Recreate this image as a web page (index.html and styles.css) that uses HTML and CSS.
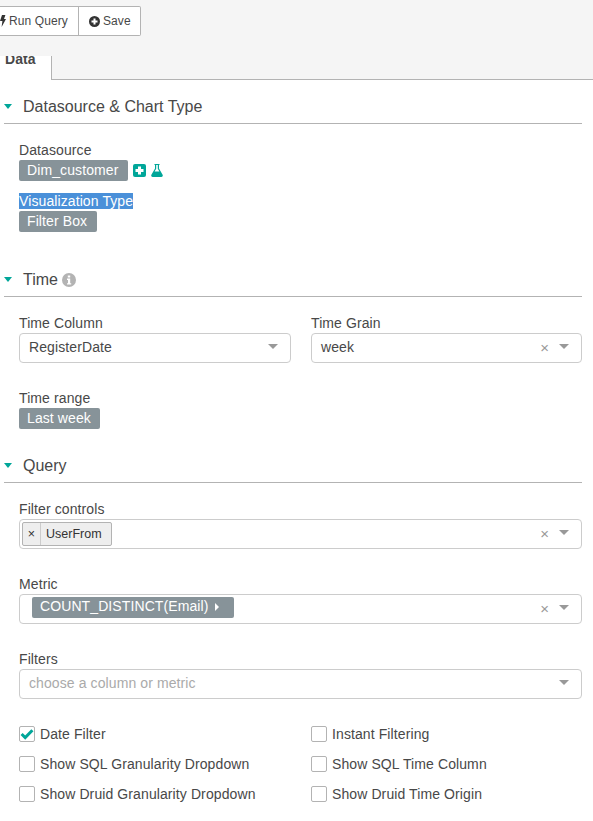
FILE: index.html
```html
<!DOCTYPE html>
<html lang="en">

<head>
    <meta charset="UTF-8">
    <title>Explore</title>
    <link rel="stylesheet" href="styles.css">
</head>

<body>
    <div class="toolbar">
        <button class="btn btn-run">
            <svg class="btn-icon" width="6" height="12" viewBox="0 0 6 12"><path d="M2 0h3.4L4 4h2L1.6 12 2.4 6H0z" fill="#333"/></svg>
            Run Query
        </button>
        <button class="btn">
            <svg class="btn-icon" width="11" height="11" viewBox="0 0 11 11"><circle cx="5.5" cy="5.5" r="5.5" fill="#333"/><path d="M2.5 4.5h2v-2h2v2h2v2h-2v2h-2v-2h-2z" fill="#fff"/></svg>
            Save
        </button>
    </div>

    <div class="tabs">
        <div class="tab"><span class="tab-label">Data</span></div>
    </div>

    <div class="section section-source">
        <div class="section-head"><span class="caret"></span><span>Datasource &amp; Chart Type</span></div>
        <div class="section-body">
            <label class="label">Datasource</label>
            <div class="pill-row">
                <span class="pill">Dim_customer</span>
                <svg class="icon-plus" width="13" height="13" viewBox="0 0 13 13"><rect width="13" height="13" rx="2" fill="#00a699"/><path d="M5 2.5h3V5h2.5v3H8v2.5H5V8H2.5V5H5z" fill="#fff"/></svg>
                <svg class="icon-flask" width="12" height="13" viewBox="0 0 12 13"><path d="M3.5 0h5v1H8v3.5l3.6 6.3c.5.9 0 2.2-1.2 2.2H1.6C.4 13-.1 11.7.4 10.8L4 4.5V1h-.5zM5.2 1v3.8L3.6 7.6h4.8L6.8 4.8V1z" fill="#00a699" fill-rule="evenodd"/></svg>
            </div>
            <div class="viz-block">
                <label class="label"><span class="selected">Visualization Type</span></label>
                <div class="pill-row"><span class="pill">Filter Box</span></div>
            </div>
        </div>
    </div>

    <div class="section section-time">
        <div class="section-head">
            <span class="caret"></span><span>Time</span>
            <svg class="icon-info" width="14" height="14" viewBox="0 0 14 14"><circle cx="7" cy="7" r="7" fill="#b3b3b3"/><path d="M5.8 2.4h2.4v2H5.8zM5 5.6h3.2v4.6h1v1.4H5v-1.4h1V7H5z" fill="#fff"/></svg>
        </div>
        <div class="section-body">
            <div class="two-col">
                <div>
                    <label class="label">Time Column</label>
                    <div class="select"><span class="select-value">RegisterDate</span><span class="arrow"></span></div>
                </div>
                <div>
                    <label class="label">Time Grain</label>
                    <div class="select"><span class="select-value">week</span><span class="clear">×</span><span class="arrow"></span></div>
                </div>
            </div>
            <div class="range-block">
                <label class="label">Time range</label>
                <div class="pill-row"><span class="pill">Last week</span></div>
            </div>
        </div>
    </div>

    <div class="section section-query">
        <div class="section-head"><span class="caret"></span><span>Query</span></div>
        <div class="section-body">
            <div class="field">
                <label class="label">Filter controls</label>
                <div class="select select-multi">
                    <span class="tag"><span class="tag-x">×</span><span class="tag-text">UserFrom</span></span>
                    <span class="clear">×</span><span class="arrow"></span>
                </div>
            </div>
            <div class="field">
                <label class="label">Metric</label>
                <div class="select select-metric">
                    <span class="pill pill-metric">COUNT_DISTINCT(Email) <span class="caret-right"></span></span>
                    <span class="clear">×</span><span class="arrow"></span>
                </div>
            </div>
            <div class="field">
                <label class="label">Filters</label>
                <div class="select"><span class="select-value placeholder">choose a column or metric</span><span class="arrow"></span></div>
            </div>
            <div class="checks">
                <div class="check">
                    <span class="box">
                        <svg width="14" height="12" viewBox="0 0 14 12"><path d="M1.6 6l3.6 3.6L12.4 2.2" fill="none" stroke="#00a699" stroke-width="3"/></svg>
                    </span>Date Filter
                </div>
                <div class="check"><span class="box"></span>Instant Filtering</div>
                <div class="check"><span class="box"></span>Show SQL Granularity Dropdown</div>
                <div class="check"><span class="box"></span>Show SQL Time Column</div>
                <div class="check"><span class="box"></span>Show Druid Granularity Dropdown</div>
                <div class="check"><span class="box"></span>Show Druid Time Origin</div>
            </div>
        </div>
    </div>
</body>

</html>
```

FILE: styles.css
```css
body {
    font-family: "Liberation Sans", Arial, sans-serif;
    font-size: 14px;
    line-height: 20px;
    letter-spacing: 0.1px;
    color: #484848;
    background-color: #fff;
    margin: 0;
    padding: 0;
    overflow: hidden;
}

.toolbar {
    display: flex;
    height: 56px;
    box-sizing: border-box;
    padding-top: 6px;
    background-color: #f5f5f5;
    position: relative;
    z-index: 1;
}

.btn {
    display: flex;
    align-items: center;
    gap: 3px;
    height: 30px;
    padding: 0 9px 0 10px;
    margin: 0;
    background-color: #fff;
    border: 1px solid #b3b3b3;
    border-left: none;
    border-radius: 0 2px 2px 0;
    font-family: inherit;
    font-size: 12px;
    letter-spacing: 0.1px;
    color: #484848;
}

.btn-run {
    padding: 0 10px 0 0;
    border-radius: 0;
}

.tabs {
    height: 23px;
    background-color: #f5f5f5;
    border-bottom: 1px solid #b3b3b3;
}

.tab {
    width: 52px;
    height: 24px;
    box-sizing: border-box;
    background-color: #fff;
    border-right: 1px solid #b3b3b3;
    overflow: hidden;
}

.tab-label {
    display: block;
    margin: -7px 0 0 5px;
    font-weight: bold;
}

.section {
    margin-left: 4px;
    margin-right: 11px;
}

.section-head {
    display: flex;
    align-items: center;
    height: 21px;
    padding-bottom: 6px;
    border-bottom: 1px solid #b3b3b3;
    font-size: 16px;
    letter-spacing: 0;
}

.caret {
    width: 0;
    height: 0;
    margin-right: 11px;
    border-left: 4.5px solid transparent;
    border-right: 4.5px solid transparent;
    border-top: 5px solid #00a699;
}

.section-source {
    margin-top: 16px;
}

.section-time {
    margin-top: 37px;
}

.section-query {
    margin-top: 26px;
}

.section-body {
    padding: 16px 0 0 15px;
}

.label {
    display: block;
    height: 20px;
    line-height: 20px;
}

.pill-row {
    display: flex;
    align-items: center;
    height: 21px;
}

.pill {
    display: inline-block;
    height: 21px;
    line-height: 20px;
    padding: 0 9.5px 0 8px;
    background-color: #879399;
    border-radius: 2px;
    color: #fff;
}

.icon-plus {
    margin-left: 5px;
}

.icon-flask {
    margin-left: 5px;
}

.viz-block {
    margin-top: 10px;
}

.selected {
    background-color: #4a90d9;
    color: #fff;
}

.icon-info {
    margin-left: 4px;
}

.two-col {
    display: grid;
    grid-template-columns: 272px 271px;
    column-gap: 20px;
}

.select {
    display: flex;
    align-items: center;
    height: 30px;
    box-sizing: border-box;
    background-color: #fff;
    border: 1px solid #ccc;
    border-radius: 4px;
    padding-right: 12px;
}

.select-value {
    flex: 1;
    margin-top: -2px;
    padding-left: 9px;
}

.placeholder {
    color: #aaa;
}

.clear {
    color: #999;
    font-size: 15px;
    margin-right: 10px;
}

.arrow {
    width: 0;
    height: 0;
    margin-top: -4px;
    border-left: 5px solid transparent;
    border-right: 5px solid transparent;
    border-top: 5px solid #999;
}

.range-block {
    margin-top: 25px;
}

.field {
    margin-bottom: 25px;
}

.select-multi .clear,
.select-metric .clear {
    margin-left: auto;
}

.tag {
    display: inline-flex;
    height: 24px;
    margin-left: 2px;
    box-sizing: border-box;
    background-color: #eee;
    border: 1px solid #b3b3b3;
    border-radius: 2px;
    font-size: 12.5px;
    letter-spacing: 0;
    line-height: 22px;
    color: #333;
}

.tag-x {
    width: 17px;
    text-align: center;
    border-right: 1px solid #ccc;
}

.tag-text {
    padding: 0 9px 0 5px;
}

.pill-metric {
    margin-left: 12px;
    margin-top: -4px;
    padding: 0 15px 0 8px;
    line-height: 18px;
    white-space: nowrap;
}

.caret-right {
    display: inline-block;
    width: 0;
    height: 0;
    margin-left: 2px;
    border-top: 4px solid transparent;
    border-bottom: 4px solid transparent;
    border-left: 4px solid #fff;
}

.checks {
    display: grid;
    grid-template-columns: 292px 1fr;
    row-gap: 10px;
}

.check {
    display: flex;
    align-items: center;
    height: 20px;
}

.box {
    display: flex;
    align-items: center;
    justify-content: center;
    flex: none;
    box-sizing: border-box;
    width: 16px;
    height: 16px;
    margin-right: 5px;
    background-color: #fff;
    border: 1px solid #b3b3b3;
    border-radius: 2px;
}
```
